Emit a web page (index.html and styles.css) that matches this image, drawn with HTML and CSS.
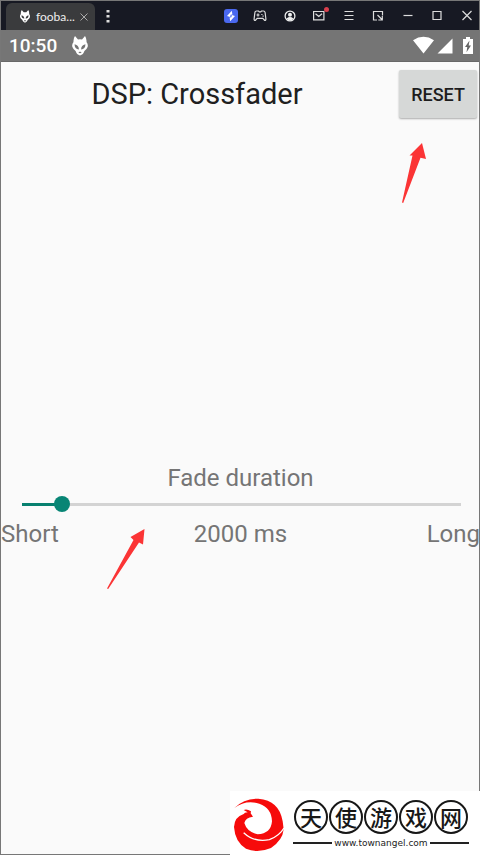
FILE: index.html
```html
<!DOCTYPE html>
<html lang="en">
<head>
<meta charset="utf-8">
<meta name="viewport" content="width=device-width, initial-scale=1">
<title>DSP: Crossfader</title>
<link rel="stylesheet" href="styles.css">
</head>
<body>
<svg width="0" height="0" class="defs" aria-hidden="true">
  <symbol id="alien" viewBox="0 0 16 20">
    <path fill="currentColor" fill-rule="evenodd" d="M3 0 6 3.600Q8 3 10 3.600L13 0Q14.800 2.500 14.500 6 16.400 8.500 15.600 11 14.500 13.800 12.400 15 11.500 18.500 8 19.500 4.500 18.500 3.600 15 1.500 13.800.4 11-.4 8.500 1.500 6 1.200 2.500 3 0ZM2.600 8.200Q2.400 13 6.900 13.500 7 9.200 2.600 8.200ZM13.400 8.200Q9 9.200 9.100 13.500 13.600 13 13.400 8.200ZM6.300 16.800Q8 17.500 9.700 16.800L8 15.500Z"/>
  </symbol>
</svg>
<div class="window">
  <header class="titlebar">
    <div class="tab">
      <svg class="tab-logo" aria-hidden="true"><use href="#alien"/></svg>
      <span class="tab-name">fooba...</span>
      <button class="tab-close" aria-label="Close tab"><svg width="8" height="8" viewBox="0 0 8 8"><path d="M.5.5l7 7M7.500.5l-7 7" stroke="#aaa"/></svg></button>
    </div>
    <button class="more" aria-label="More"><svg width="4" height="14" viewBox="0 0 4 14" fill="#ddd"><path d="M.5 1h3v2.500h-3zM.5 6h3v2.500h-3zM.5 11h3v2.500h-3z"/></svg></button>
    <nav class="tools" aria-label="Window tools">
      <button aria-label="Boost"><svg viewBox="0 0 14 14"><rect width="14" height="14" rx="3" fill="#4a68ef"/><path d="M7.800 1.800 3 7.100l3.200.8.400-2.100 1.800-.3zM6.200 12.200 11 6.900l-3.200-.8-.4 2.100-1.800.3z" fill="#fff"/></svg></button>
      <button aria-label="Gamepad"><svg viewBox="0 0 14 14" fill="none" stroke="#ddd" stroke-width="1.200"><path d="M3.500 2h2l.8.900h1.400l.8-.9h2q1.300 0 1.600 1.500l.8 6.500q0 1.700-1.200 1.500L9.800 9.300H4.200L2.300 11.500Q1.100 11.700 1.100 10l.8-6.500Q2.200 2 3.500 2ZM3.500 6h3M5 4.500v3M8.300 5.500h1.200M9.500 7.200h1.200"/></svg></button>
      <button aria-label="Account"><svg viewBox="0 0 14 14"><circle cx="7" cy="7" r="4.900" fill="none" stroke="#eee" stroke-width="1.300"/><circle cx="7" cy="5.700" r="2" fill="#eee"/><path d="M3.600 9.500Q7 6.600 10.400 9.500 9 11.600 7 11.600T3.600 9.500" fill="#eee"/></svg></button>
      <button aria-label="Messages"><svg viewBox="0 0 14 14"><path d="M1.600 2.500h10.300v8.300H1.600zM3.500 4.700 6.800 7.500l3.200-2.800" fill="none" stroke="#ddd" stroke-width="1.200"/></svg><span class="dot"></span></button>
      <button aria-label="Menu"><svg viewBox="0 0 14 14"><path d="M2.500 2.500h9M2.500 6.500h9M2.500 10.500h9" stroke="#ddd" stroke-width="1.200"/></svg></button>
      <button aria-label="Shrink"><svg viewBox="0 0 14 14" fill="none" stroke="#ddd" stroke-width="1.200"><path d="M6 11h-3.500v-8.500h9v4M6.500 6l4.500 4.500M11.300 7v4h-4"/></svg></button>
      <button aria-label="Minimize"><svg viewBox="0 0 14 14"><path d="M2.500 6.500h9" stroke="#ddd" stroke-width="1.200"/></svg></button>
      <button aria-label="Maximize"><svg viewBox="0 0 14 14"><path d="M3 2.500h8v8h-8z" fill="none" stroke="#ddd" stroke-width="1.200"/></svg></button>
      <button aria-label="Close"><svg viewBox="0 0 14 14"><path d="m2.500 2 9 9m0-9-9 9" stroke="#ddd" stroke-width="1.200"/></svg></button>
    </nav>
  </header>
  <div class="status">
    <span class="clock">10:50</span>
    <svg class="status-logo" aria-hidden="true"><use href="#alien"/></svg>
    <svg class="signals" viewBox="0 0 62 20" fill="#fff" aria-hidden="true">
      <path d="M0 4.200Q10.500-2.500 21 4.200L10.500 17.500ZM39.500 2.500v15h-15zM50 3h3V1h4v2h3v15H50z"/>
      <path d="M56.500 4.500 52 11h2.300l-.8 5.200L58 9.500h-2.300z" fill="#666"/>
    </svg>
  </div>
  <main class="app">
    <div class="heading">
      <h1>DSP: Crossfader</h1>
      <button class="reset">RESET</button>
    </div>
    <section class="fade">
      <label for="duration">Fade duration</label>
      <input id="duration" type="range" min="0" max="22000" value="2000">
      <div class="scale">
        <span>Short</span><output for="duration">2000 ms</output><span class="end">Long</span>
      </div>
    </section>
  </main>
</div>
<svg class="arrow arrow-reset" viewBox="0 0 24 62" aria-hidden="true"><path d="M20 0 24 16 18.500 14.800 1.200 60 0 59.500 10.500 12.500 7.500 12.500Z"/></svg>
<svg class="arrow arrow-slider" viewBox="0 0 40 62" aria-hidden="true"><path d="M37.500 1 36 16.500 32 14.500 1.200 61 0 60.500 26.500 12 23.500 9Z"/></svg>
<aside class="brand">
  <svg class="phoenix" viewBox="16 18 156 162" aria-hidden="true">
    <path fill="#f60b0b" d="M20 48Q50 18 92 20 155 25 165 88L168 112Q165 145 130 168 90 185 55 170 22 150 19 105 20 75 48 66L52 62 60 61 48 54Q58 50 70 58L69 64 76 74Q53 77 50 93 58 120 90 127 130 125 133 88 132 48 95 35 55 22 20 48Z"/>
    <path fill="none" stroke="#fff" stroke-width="4" d="M48 122Q80 152 125 143 155 132 169 108"/>
  </svg>
  <div class="brand-text">
    <div class="brand-name" lang="zh"><span>天</span><span>使</span><span>游</span><span>戏</span><span>网</span></div>
    <div class="brand-url">www.townangel.com</div>
  </div>
</aside>
</body>
</html>
```
FILE: styles.css
```css
* {
  box-sizing: border-box;
}

body {
  margin: 0;
  position: relative;
  min-height: 100vh;
  overflow: hidden;
  font-family: Roboto, "Noto Sans CJK SC", sans-serif;
  background: #fafafa;
}

button {
  padding: 0;
  border: 0;
  background: none;
}

.defs {
  position: absolute;
}

.window {
  display: flex;
  flex-direction: column;
  min-height: 100vh;
  border: 1px solid #777;
}

.titlebar {
  display: flex;
  height: 29px;
  background: #171923;
}

.tab {
  display: flex;
  align-items: center;
  align-self: flex-end;
  gap: 5px;
  height: 27px;
  margin-left: 5px;
  padding: 0 7px 0 13px;
  border-radius: 6px 6px 0 0;
  background: #3a3b3d;
  color: #fff;
}

.tab-logo {
  width: 12px;
  height: 13px;
}

.tab-name {
  font: 12px Lato, sans-serif;
  color: #eee;
}

.tab-close,
.more,
.tools button {
  display: flex;
  align-items: center;
  justify-content: center;
}

.more {
  width: 26px;
}

.tools {
  display: flex;
  flex: 1;
  justify-content: space-between;
  margin-left: 103px;
  padding-right: 5px;
}

.tools button {
  position: relative;
}

.tools svg {
  width: 14px;
  height: 14px;
}

.dot {
  position: absolute;
  top: 6px;
  right: -3px;
  width: 5px;
  height: 5px;
  border-radius: 50%;
  background: #d93f4c;
}

.status {
  display: flex;
  align-items: center;
  height: 32px;
  padding: 0 4px 0 8px;
  border-bottom: 1px solid #686868;
  background: #757575;
  color: #fff;
}

.clock {
  font-size: 19px;
  font-weight: 500;
}

.status-logo {
  width: 16px;
  height: 20px;
  margin-left: 15px;
}

.signals {
  width: 62px;
  height: 20px;
  margin-left: auto;
}

.app {
  flex: 1;
}

.heading {
  display: flex;
  align-items: center;
  padding: 7px 2px 0 0;
}

h1 {
  flex: 1;
  margin: 0;
  padding-right: 6px;
  font-size: 29px;
  font-weight: 400;
  line-height: 50px;
  text-align: center;
  color: #202020;
}

.reset {
  width: 78px;
  height: 48px;
  border-radius: 2px;
  background: #d6d8d7;
  box-shadow: 0 1px 2px #aaa;
  font: 500 18px Roboto, sans-serif;
  color: #1d1d1d;
}

.fade {
  display: flex;
  flex-direction: column;
  margin: 344px -1px 0 0;
  font-size: 24px;
  line-height: 30px;
  color: #757575;
}

.fade label {
  text-align: center;
}

.fade input {
  appearance: none;
  height: 16px;
  margin: 3px 11px 7px 13px;
  background: linear-gradient(90deg, #07806f 9%, #d3d3d3 9%) 8px center / calc(100% - 16px) 3px no-repeat;
}

.fade input::-webkit-slider-thumb {
  appearance: none;
  width: 16px;
  height: 16px;
  border-radius: 50%;
  background: #088575;
}

.scale {
  display: grid;
  grid-template-columns: 1fr auto 1fr;
}

.end {
  text-align: right;
}

.arrow {
  position: absolute;
  fill: #fb3435;
}

.arrow-reset {
  top: 143px;
  left: 402px;
  width: 24px;
  height: 62px;
}

.arrow-slider {
  top: 528px;
  left: 107px;
  width: 40px;
  height: 62px;
}

.brand {
  position: absolute;
  right: 0;
  bottom: 0;
  display: flex;
  align-items: flex-start;
  gap: 8px;
  padding: 7px 11px 3px 3px;
  background: #fff;
}

.phoenix {
  width: 52px;
  height: 54px;
}

.brand-text {
  display: flex;
  flex-direction: column;
  gap: 1px;
  padding-top: 2px;
}

.brand-name {
  display: flex;
  gap: 1px;
  padding: 0 1px;
}

.brand-name span {
  width: 34px;
  height: 34px;
  border: 2px solid #171717;
  border-radius: 50%;
  font: 500 22px/29px "Noto Sans CJK SC", sans-serif;
  text-align: center;
  color: #171717;
}

.brand-url {
  display: flex;
  align-items: center;
  gap: 2px;
  font: 9px/16px "DejaVu Sans", sans-serif;
  color: #222;
}

.brand-url::before,
.brand-url::after {
  content: "";
  flex: 1;
  height: 2px;
  background: #222;
}
```
